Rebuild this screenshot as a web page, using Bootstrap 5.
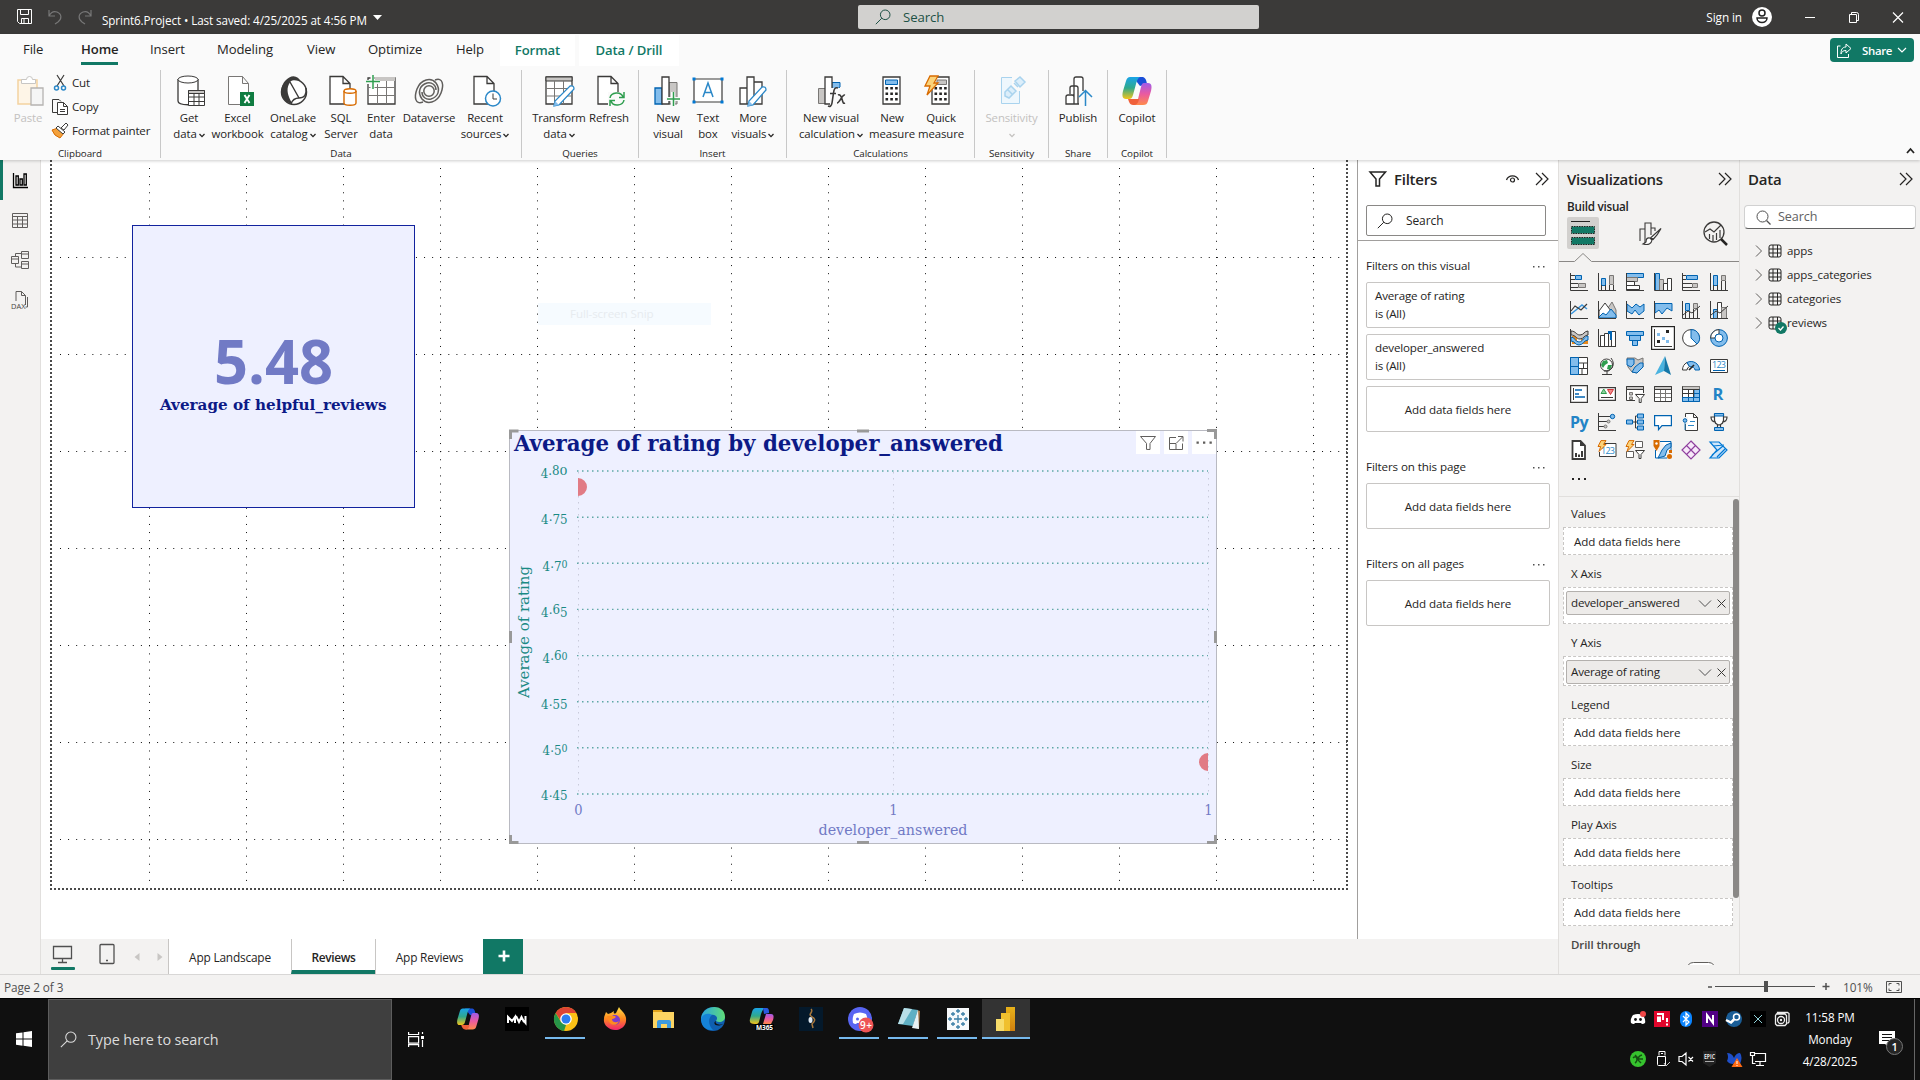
<!DOCTYPE html>
<html lang="en">
<head>
<meta charset="utf-8">
<meta name="viewport" content="width=device-width, initial-scale=1">
<title>Sprint6.Project</title>
<link href="https://cdn.jsdelivr.net/npm/bootstrap@5.3.0/dist/css/bootstrap.min.css" rel="stylesheet">
<style>
html,body{height:100%}
body{width:1920px;height:1080px;overflow:hidden;font-family:"Open Sans","Noto Sans",sans-serif;font-size:11.3px;line-height:16px;color:#252423;background:#f3f2f1;letter-spacing:-.1px}
svg{display:block;flex:none;fill:none;overflow:visible}
.nw{white-space:nowrap}
.titlebar{height:34px;background:#3b3a39;color:#fff}
.top-search{width:401px;height:24px;margin-left:476px;background:#d2d1cf;color:#1d5145;border-radius:2px;font-size:13.2px}
.ribbon{height:126px;background:#fafafa;box-shadow:0 1px 3px rgba(0,0,0,.2);position:relative;z-index:3}
.tabrow{height:34px;font-size:13.1px;padding-left:23px}
.tabrow .rt{position:relative;line-height:31px}
.tabrow .on{font-weight:600}
.tabrow .on::after{content:"";display:block;height:3px;background:#117865;margin-top:-3px}
.tabrow .ctx{background:#fff;color:#117865;font-weight:600;height:31px;margin-top:1px;line-height:30px;text-align:center}
.share{width:84px;height:24px;background:#117865;color:#fff;border-radius:4px;margin-right:6px;font-size:11.4px;font-weight:600;letter-spacing:-.3px}
.rg{height:88px;border-right:1px solid #c8c8c8;display:flex;flex-direction:column;justify-content:space-between}
.rg .gl{font-size:9.8px;line-height:12px;text-align:center;position:relative;margin-bottom:-2px;letter-spacing:-.05px}
.rb{display:flex;flex-direction:column;align-items:center;white-space:nowrap;text-align:center;line-height:16px;font-size:11.4px;padding-top:5px}
.rb>svg:first-child{margin-bottom:3px}
.rb .ln{display:flex;align-items:center;gap:2px}
.rb .ln svg{margin-top:3px}
.k{stroke:#3b3a39}.w{fill:#fff;stroke:#3b3a39}.b{fill:#83bdec;stroke:#0063b1}.bl{stroke:#0063b1}.g{fill:#c8c6c4;stroke:#797775}
.side{width:41px;background:#f3f2f1;border-right:1px solid #e1dfdd}
.side .si{height:40px;display:flex;align-items:center;justify-content:center}
.side .act{border-left:3px solid #117865;padding-right:3px}
.canvas{height:779px;background:#fff;position:relative;overflow:hidden}
.canvas>*{position:absolute}
.kpi{left:91px;top:65px;width:283px;height:283px;background:#eef0ff;border:1px solid #12239e}
.visual{left:468px;top:270px;width:708px;height:414px;background:#eef0ff;border:1px solid #b9bac2}
.toast-ghost{left:497px;top:143px;width:173px;height:22px;background:#f6fbff;color:#e7ebef;padding:3px 0 0 32px;font-size:11.600px}
.ptabs{height:35px;background:#f3f2f1}
.pt{height:35px;background:#fff;border-left:1px solid #c8c6c4;text-align:center;line-height:37px;font-size:11.9px;letter-spacing:-.2px}
.pt.on{font-weight:600;border-bottom:4px solid #117865;letter-spacing:-.35px}
.pt.add{background:#117865;width:40px;border-color:#117865}
.filters{width:201px;height:779px;background:#fff;border-left:1px solid #a19f9d;position:relative}
.ph{font-size:15px;font-weight:600;letter-spacing:-.25px;line-height:20px}
.fc{width:184px;height:46px;border:1px solid #c8c6c4;border-radius:2px;margin:0 0 6px 8px;background:#fff;padding-left:8px;font-size:11.6px;letter-spacing:-.17px;line-height:18px;display:flex;flex-direction:column;justify-content:center}
.fc.mid{align-items:center;padding:1px 0 0;letter-spacing:-.1px}
.fl{height:16px;padding:1px 13px 0 8px;font-size:11.6px}
.fl svg{margin-top:8px}
.viz{width:182px;background:#f3f2f1;border-left:1px solid #e1dfdd;border-right:1px solid #e1dfdd;position:relative}
.vgrid{display:grid;grid-template-columns:repeat(6,28px);grid-auto-rows:28px;padding-left:6px}
.vgrid>div{display:flex;align-items:center;justify-content:center}
.wl{height:32px;padding:11px 0 0 12px;font-size:11.5px}
.well{margin-left:4px;width:170px;border:1px dashed #c8c6c4;background:#fff;font-size:11.6px}
.well.e{height:28px;line-height:27px;padding-left:10px}
.pill{margin:3px 2px 0;height:24px;border:1px solid #b3b0ad;border-radius:2px;background:#edebe9;display:flex;align-items:center;padding:0 3px 0 4px;letter-spacing:-.2px}
.scr{position:absolute;right:0;top:339px;width:6px;height:399px;background:#8a8886;border-radius:3px}
.status{height:24px;border-top:1px solid #d8d7d6;background:#f3f2f1;color:#505050;font-size:11.8px}
.taskbar{height:82px;background:#101010;border-top:1px solid #000;color:#fff}
.tsearch{width:344px;height:81px;background:#3f3f3f;border:1px solid #5d5d5d;color:#dcdcdc;font-size:14.4px;letter-spacing:-.1px}
.ti{width:49px;height:39px;display:flex;align-items:center;justify-content:center;position:relative}
.ti.run::after{content:"";position:absolute;bottom:-1px;left:4px;right:5px;height:2px;background:#76b9ed}
.ti.cur{background:#333;width:48px}.ti.cur::after{left:0;right:0}
.tray{display:grid;grid-template-columns:repeat(7,24px);grid-template-rows:40px 40px}
.tray>div{display:flex;align-items:center;justify-content:center}
.clock{width:80px;font-size:11.7px;line-height:22px;text-align:center}
.geo{font-family:"DejaVu Serif Condensed","DejaVu Serif",serif;letter-spacing:0}
.sans{font-family:"Open Sans",sans-serif;letter-spacing:0}
.tree{height:24px;font-size:11.5px}
</style>
</head>
<body class="d-flex flex-column">
<svg width="0" height="0" class="position-absolute"><defs>
<linearGradient id="c1" x1="0" y1="0" x2="0" y2="1"><stop offset="0" stop-color="#1aa4e8"/><stop offset=".5" stop-color="#2fa98c"/><stop offset="1" stop-color="#f5c518"/></linearGradient>
<linearGradient id="c2" x1="0" y1="0" x2="0" y2="1"><stop offset="0" stop-color="#a05be8"/><stop offset=".5" stop-color="#ea5aa0"/><stop offset="1" stop-color="#ff8a4a"/></linearGradient>
<linearGradient id="ff" x1="0" y1="0" x2="0" y2="1"><stop offset="0" stop-color="#ffe14a"/><stop offset=".5" stop-color="#ff8a1f"/><stop offset="1" stop-color="#f0246e"/></linearGradient>
<linearGradient id="ed" x1="0" y1="0" x2="1" y2="0"><stop offset="0" stop-color="#2aa5e0"/><stop offset="1" stop-color="#5fdc78"/></linearGradient>
<linearGradient id="pb" x1="0" y1="0" x2="0" y2="1"><stop offset="0" stop-color="#e8b21a"/><stop offset="1" stop-color="#d0800f"/></linearGradient>
<symbol id="copilot" viewBox="0 0 32 32"><path fill="#1a4fd8" d="M12 2h9c3 0 4 2 5 7l-7 2z"/><path fill="url(#c1)" d="M9 2h10c-2 1-3 3-4 7l-3 11c-1 3-2 4-4 4H5c-4 0-4-4-3-8l3-10c1-3 2-4 4-4z"/><path fill="url(#c2)" d="M23 8h4c4 0 4 4 3 8l-3 10c-1 3-2 4-5 4H12c3-1 4-3 5-6l3-12c1-3 1-4 3-4z"/><path fill="#f0603a" d="M10 24h8c-1 4-2 6-6 6-3 0-4-3-5-6z"/></symbol>
<symbol id="mag" viewBox="0 0 16 16"><circle cx="10.2" cy="5.8" r="4.8" stroke="currentColor"/><path stroke="currentColor" d="M6.8 9.2L.8 15.2"/></symbol>
<symbol id="chev2" viewBox="0 0 14 14"><path stroke="#252423" stroke-width="1.2" d="M1 1l6 6-6 6M7 1l6 6-6 6"/></symbol>
<symbol id="cd" viewBox="0 0 6 5"><path stroke="currentColor" stroke-width="1.3" d="M.5 1L3 3.6 5.500 1"/></symbol>
<symbol id="dots" viewBox="0 0 12 2"><path fill="#505050" d="M0 0h1.500v1.500H0zM5 0h1.500v1.500H5zM10 0h1.500v1.500H10z"/></symbol>
<symbol id="tbl" viewBox="0 0 14 14"><rect x="1" y="1" width="12" height="12" rx="2" stroke="#252423"/><path stroke="#252423" d="M1 5h12M1 9h12M5 1v12M9.500 1v12"/></symbol>
<symbol id="bolt" viewBox="0 0 10 12"><path fill="#fbd37a" stroke="#d86b00" d="M4 .6h5L6.500 4.500H9L2 11.500 3.700 6.500H1z"/></symbol>
</defs></svg>

<!-- window title bar -->
<header class="titlebar d-flex align-items-center">
 <svg width="84" height="16" style="margin-left:17px"><path stroke="#fff" d="M.5.500h14v14h-12l-2-2zM3.500.500v5h8v-5M4.500 14.500v-5h7v5M7 10v4"/><path stroke="#777" stroke-width="1.200" d="M32 1v6h6M32 7c2-4 5-5 8-4 5 2 5 7 1 10l-3 2M74 1v6h-6M74 7c-2-4-5-5-8-4-5 2-5 7-1 10l3 2"/></svg>
 <span class="nw" id="ttl" style="width:266px;padding-left:1px;padding-top:6px;font-size:11.7px">Sprint6.Project • Last saved: 4/25/2025 at 4:56 PM</span>
 <svg width="9" height="5" style="margin-left:6px"><path fill="#fff" d="M0 0h9L4.500 5z"/></svg>
 <div class="top-search d-flex align-items-center" style="padding-left:17px"><svg width="16" height="16"><use href="#mag"/></svg><span class="ms-2 ps-1">Search</span></div>
 <div class="ms-auto d-flex align-items-center nw" style="font-size:11.800px;padding-right:16px"><span>Sign in</span>
 <svg width="20" height="20" style="margin-left:9px"><circle cx="11" cy="10" r="10" fill="#fff"/><circle cx="11" cy="6" r="3" stroke="#222" stroke-width="1.500"/><path stroke="#222" stroke-width="1.500" d="M6 11h10c0 6-10 6-10 0z"/></svg>
 <svg width="12" height="12" style="margin-left:33px"><path stroke="#fff" d="M1 6.500h10"/></svg>
 <svg width="12" height="12" style="margin-left:32px"><path stroke="#fff" d="M1.500 3.500h7v8h-7zM3.500 3V1.500h5q2 0 2 2V9.500H9"/></svg>
 <svg width="12" height="12" style="margin-left:32px"><path stroke="#fff" stroke-width="1.200" d="M1 1.500l10 10M11 1.500l-10 10"/></svg></div>
</header>

<!-- ribbon -->
<section class="ribbon">
 <nav class="tabrow d-flex nw">
  <div class="rt" style="width:58px">File</div><div style="width:69px"><span class="rt on d-inline-block">Home</span></div><div class="rt" style="width:67px">Insert</div><div class="rt" style="width:90px">Modeling</div><div class="rt" style="width:61px">View</div><div class="rt" style="width:88px">Optimize</div><div class="rt" style="width:44px">Help</div>
  <div class="rt ctx" style="width:75px">Format</div><div class="rt ctx ms-1" style="width:100px">Data / Drill</div>
  <div class="share ms-auto d-flex align-items-center" style="margin-top:4px"><svg width="15" height="15" style="margin-left:7px"><path stroke="#fff" d="M3.500 3H.5v11.500h11V11M9 1l5 4.500L9 10V7.500C6 7.500 5 8.500 4 11c0-4 1-7 5-7z"/></svg><span style="margin:1px 5px 0 10px">Share</span><svg width="10" height="7"><path stroke="#fff" stroke-width="1.200" d="M1 1l4 4 4-4"/></svg></div>
 </nav>
 <div class="d-flex" style="padding-top:2px">
  <div class="rg" style="width:161px"><div class="d-flex">
   <div class="rb" style="width:46px;margin-left:5px;color:#c3c1bf"><svg width="32" height="32"><path fill="#fef5e7" stroke="#f4d2a0" stroke-width="1.500" d="M6 5h19v24H6z"/><path fill="#fff" stroke="#c8c6c4" d="M9.500 8.500v-4h5q0-3 3-3t3 3h3v4z"/><path fill="#f5f5f5" stroke="#b5b3b1" stroke-width="1.300" d="M19 13h12v17H19z"/></svg><span>Paste</span></div>
   <div class="d-flex flex-column nw" style="padding:1px 0 0 1px;font-size:11.600px;letter-spacing:-.2px">
    <div class="d-flex align-items-center" style="height:24px"><svg width="18" height="18"><path stroke="#3b3a39" stroke-width="1.200" d="M5 1l7 11M12 1L5 12"/><circle cx="4.500" cy="14" r="2" stroke="#2b88c8" stroke-width="1.500"/><circle cx="11.500" cy="14" r="2" stroke="#2b88c8" stroke-width="1.500"/></svg><span style="margin-left:2px">Cut</span></div>
    <div class="d-flex align-items-center" style="height:24px"><svg width="18" height="18"><path class="k" d="M6 14.500H.5V1.500H7l2 2"/><path class="w" d="M5.500 4.500h6l4 4v8h-10zM11.500 4.500v4h4M8 11.500h5M8 13.500h5"/></svg><span style="margin-left:2px">Copy</span></div>
    <div class="d-flex align-items-center" style="height:24px"><svg width="18" height="18"><path class="w" d="M9 6l5-5 2 2-4 5z"/><path fill="#f3a13c" stroke="#d86b00" d="M0 8l6-2 6 5-4 5q-6-2-8-8z"/><path class="w" d="M6 4l7 6-2 2-7-6z"/></svg><span style="margin-left:2px">Format painter</span></div>
   </div></div><div class="gl">Clipboard</div></div>

  <div class="rg" style="width:361px"><div class="d-flex" style="padding-left:5px">
   <div class="rb" style="width:46px"><svg width="32" height="32"><path class="w" stroke-width="1.300" d="M5 4v22c0 5 20 5 20 0V4"/><ellipse class="w" cx="15" cy="4.500" rx="10" ry="3.500"/><path fill="#fff" stroke="#3b3a39" d="M15.500 15.500h16v15h-16zM15.500 22h16M15.500 26.500h16M21 19v11M26 19v11"/><path fill="#c8c6c4" stroke="#3b3a39" d="M15.500 15.500h16v3h-16z"/></svg><span>Get</span><span class="ln">data<svg width="6" height="5"><use href="#cd"/></svg></span></div>
   <div class="rb" style="width:51px"><svg width="32" height="32"><path fill="#fff" stroke="#797775" d="M6.500 1.500h14l6 7v21h-20zM20.500 1.500v7h6"/><path fill="#107c41" d="M18 17h14v14H18z"/><path stroke="#fff" stroke-width="1.900" d="M22.500 20l5 8M27.500 20l-5 8"/></svg><span>Excel</span><span>workbook</span></div>
   <div class="rb" style="width:60px"><svg width="32" height="32"><circle cx="17" cy="17" r="12.500" fill="#fff" stroke="#3b3a39" stroke-width="1.500"/><path fill="#3b3a39" d="M8 6C14-1 21 0 24 7 20 4 17 4 14 6l-2 3c-3 6-1 12 3 19C5 29 1 14 8 6z"/><path class="k" stroke-width="1.400" d="M13 7l9 16c-4 0-7 3-8 6M22 23c5 0 8-3 7-10"/></svg><span>OneLake</span><span class="ln">catalog<svg width="6" height="5"><use href="#cd"/></svg></span></div>
   <div class="rb" style="width:36px"><svg width="32" height="32"><path class="w" stroke-width="1.300" d="M5 1.500h13l7 7V29H5zM18 1.500v7h7"/><path fill="#fff" stroke="#d86b00" stroke-width="1.400" d="M19 16v12c0 3 12 3 12 0V16"/><ellipse cx="25" cy="16" rx="6" ry="2.200" fill="#fff" stroke="#d86b00" stroke-width="1.400"/></svg><span>SQL</span><span>Server</span></div>
   <div class="rb" style="width:44px"><svg width="32" height="32"><path class="w" stroke-width="1.300" d="M3 3h27v26H3z"/><path fill="#c8c6c4" d="M10 2h20v4H10z"/><path stroke="#797775" d="M3 12.500h27M3 20.500h27M12.500 6v23M21.500 6v23"/><path stroke="#fafafa" stroke-width="4" d="M0 7h15M7.500 0v14"/><path stroke="#2f9e4f" stroke-width="1.500" d="M1 6.500h14M8 0v14"/></svg><span>Enter</span><span>data</span></div>
   <div class="rb" style="width:52px"><svg width="32" height="32"><g stroke="#605e5c" stroke-width="1.500"><circle cx="16" cy="16" r="5.200"/><path d="M10 27C2 30 1 22 4 14 8 4 18 2 23 8c5 7 2 14-5 16-5 1-9-2-9-7M22 5c8-3 9 5 6 13-4 10-14 12-19 6-5-7-2-14 5-16 5-1 9 2 9 7"/></g></svg><span>Dataverse</span></div>
   <div class="rb" style="width:60px"><svg width="32" height="32"><path class="w" stroke-width="1.300" d="M5 1.500h13l7 7V29H5zM18 1.500v7h7"/><circle cx="24" cy="23.500" r="7.500" fill="#fff" stroke="#2b88c8" stroke-width="1.500"/><path class="k" d="M24 18.500v5.500h4"/></svg><span>Recent</span><span class="ln">sources<svg width="6" height="5"><use href="#cd"/></svg></span></div>
  </div><div class="gl">Data</div></div>

  <div class="rg" style="width:117px"><div class="d-flex" style="padding-left:8px">
   <div class="rb" style="width:58px"><svg width="32" height="32"><path class="w" stroke-width="1.300" d="M3 2h26v27H3z"/><path fill="#c8c6c4" stroke="#3b3a39" d="M3 2h26v4H3z"/><path stroke="#797775" d="M3 13.500h26M3 21h26M11.500 6v23M20.500 6v23"/><path fill="#fff" stroke="#2b88c8" stroke-width="1.300" d="M27 11q4-1 4 3L16 30l-5 1 1-5z"/><path fill="#83bdec" d="M12 26l4 4-5 1z"/></svg><span style="letter-spacing:-.25px">Transform</span><span class="ln">data<svg width="6" height="5"><use href="#cd"/></svg></span></div>
   <div class="rb" style="width:42px"><svg width="32" height="32"><path class="w" stroke-width="1.300" d="M5 1.500h13l7 7V29H5zM18 1.500v7h7"/><path fill="#fafafa" d="M15 17h17v15H15z"/><path stroke="#2f9e4f" stroke-width="1.500" d="M17 23c1-6 11-7 13-1M31 17v5.500h-5M31 25c-1 6-11 7-13 1M17 31v-5.500h5"/></svg><span>Refresh</span></div>
  </div><div class="gl">Queries</div></div>

  <div class="rg" style="width:148px"><div class="d-flex" style="padding-left:8px">
   <div class="rb" style="width:42px"><svg width="32" height="32"><path class="b" stroke-width="1.300" d="M3 13h7v16H3z"/><path fill="#c8c6c4" stroke="#797775" d="M17 7.500h8V29h-8z"/><path class="w" stroke-width="1.300" d="M10 2h7v27h-7z"/><path stroke="#fafafa" stroke-width="4" d="M14 24h14M21 17v15"/><path stroke="#2f9e4f" stroke-width="1.500" d="M15 24h13M21.500 17v14"/></svg><span>New</span><span>visual</span></div>
   <div class="rb" style="width:38px"><svg width="32" height="32"><path class="w" stroke-width="1.200" d="M2 4h28v23H2z"/><path fill="#0078d4" d="M.5 2.500h3v3h-3zM28.500 2.500h3v3h-3zM.5 25.500h3v3h-3zM28.500 25.500h3v3h-3z"/><path stroke="#2b88c8" stroke-width="1.500" d="M11 22L16 8l5 14M12.500 17.500h7"/></svg><span>Text</span><span>box</span></div>
   <div class="rb" style="width:52px"><svg width="32" height="32"><path class="w" stroke-width="1.300" d="M3 13h7v16H3zM10 2h7v27h-7zM17 7h8v22h-8z"/><path fill="#fff" stroke="#2b88c8" stroke-width="1.300" d="M25 12q4-1 4 3L16 30l-5 1 1-5z"/><path fill="#83bdec" d="M12 26l4 4-5 1z"/></svg><span>More</span><span class="ln">visuals<svg width="6" height="5"><use href="#cd"/></svg></span></div>
  </div><div class="gl">Insert</div></div>

  <div class="rg" style="width:188px"><div class="d-flex" style="padding-left:7px">
   <div class="rb" style="width:74px"><svg width="32" height="32"><path fill="#c8c6c4" stroke="#797775" d="M3.500 13.500h7v15h-7z"/><path class="b" d="M17 7.500h8V12l-8 6z"/><path class="w" stroke-width="1.300" d="M10 2h7v27h-7z"/><path fill="#fafafa" d="M15 13h17v19H15z"/><path class="k" stroke-width="1.600" d="M23 13c-3-1-4 1-4.500 5L17 28c-.5 3-2 4-4 3M15 18.500h6M23 20c2-1 3 1 4 4s1 5 3 4M30 20c-3-1-5 8-8 8"/></svg><span>New visual</span><span class="ln">calculation<svg width="6" height="5"><use href="#cd"/></svg></span></div>
   <div class="rb" style="width:48px"><svg width="32" height="32"><path class="w" stroke-width="1.300" d="M7 2h17v27H7z"/><path class="b" d="M9.500 5h12v4.500h-12z"/><path stroke="#252423" stroke-width="2.600" stroke-dasharray="2.600 2.200" d="M9.500 13.300h12.200M9.500 18.800h12.200M9.500 24.300h12.200"/></svg><span>New</span><span>measure</span></div>
   <div class="rb" style="width:50px"><svg width="32" height="32"><path class="w" stroke-width="1.300" d="M7 2h17v27H7z"/><path fill="#c8c6c4" stroke="#797775" d="M12 5h9.500v4.500H12z"/><path stroke="#252423" stroke-width="2.600" stroke-dasharray="2.600 2.200" d="M9.500 13.300h12.200M9.500 18.800h12.200M9.500 24.300h12.200"/><path fill="#fbd37a" stroke="#d86b00" stroke-width="1.300" d="M5 1h8l-4 7h4L2 20l3-9H0z"/></svg><span>Quick</span><span>measure</span></div>
  </div><div class="gl">Calculations</div></div>

  <div class="rg" style="width:74px"><div class="rb" style="color:#c3c1bf"><svg width="32" height="32"><path fill="#eef7fd" stroke="#a9d3ee" d="M5.500 2.500h18v26h-18z"/><path fill="#fafafa" d="M16 0h14v16H16z"/><path fill="#dceefa" stroke="#a9d3ee" stroke-width="1.500" d="M9 17l6-6 5 5-7 7-4-2zM12 15l4 4M19 6l5-4 5 5-5 5zM24 2l4 4M22 12l-4-4"/></svg><span>Sensitivity</span><svg width="6" height="5" style="margin-top:7px"><use href="#cd"/></svg></div><div class="gl">Sensitivity</div></div>
  <div class="rg" style="width:59px"><div class="rb"><svg width="32" height="32"><path class="w" stroke-width="1.300" d="M12 12V4q0-2 2-2h5q2 0 2 2v25H12zM8 19v-6q0-2 2-2h4q2 0 2 2v16M4 29v-7q0-2 2-2h4q2 0 2 2v7z"/><path fill="#fafafa" d="M17 16h12v15H17z"/><path stroke="#2b88c8" stroke-width="1.500" d="M23.500 31V16.500M17 22l6.500-6.500L30 22"/></svg><span>Publish</span></div><div class="gl">Share</div></div>
  <div class="rg" style="width:59px"><div class="rb"><svg width="32" height="32"><use href="#copilot" x="0" y="0" width="32" height="32"/></svg><span>Copilot</span></div><div class="gl">Copilot</div></div>
  <svg width="9" height="6" class="ms-auto align-self-end" style="margin:0 5px 4px 0"><path stroke="#252423" stroke-width="1.800" d="M1 5l3.500-4L8 5"/></svg>
 </div>
</section>

<!-- workspace -->
<main class="d-flex" style="height:814px">
 <aside class="side">
  <div class="si act"><svg width="16" height="18"><path stroke="#000" stroke-width="1.300" d="M1.500 2v14.500H16M4 5h2.300v9H4zM8 8h2.300v6H8zM12 3h2.300v11H12z"/></svg></div>
  <div class="si"><svg width="17" height="17"><path stroke="#605e5c" d="M.5 1.500h15v14H.5zM.5 4.500h15M.5 8h15M.5 12h15M5.500 4v11M10.500 4v11"/></svg></div>
  <div class="si"><svg width="18" height="18"><path stroke="#605e5c" d="M10.500.500h7v7h-7zM10.500 3h7M.5 5.500h7v7h-7zM.5 8h7M10.500 10.500h7v7h-7zM10.500 13h7M10 2.500H4.500V5M4.500 13v3H10"/></svg></div>
  <div class="si"><svg width="19" height="18"><path stroke="#605e5c" d="M5 10V.500h5.500l4 4V14M10.500.500v4h4M16.500 6v10h-2"/><path fill="#f3f2f1" d="M0 11h14v7H0z"/><text class="sans" x="0" y="17.500" fill="#484644" font-size="7.500" textLength="14.500" lengthAdjust="spacingAndGlyphs">DAX</text></svg></div>
 </aside>

 <div class="d-flex flex-column" style="width:1517px">
 <div class="d-flex">
  <section class="canvas" style="width:1316px">
   <svg width="1316" height="779" viewBox="41 160 1316 779">
    <path stroke="#111" stroke-dasharray="1 7.090" d="M149.500 168V888M246.500 168V888M343.500 168V888M440.500 168V888M537.500 168V888M634.500 168V888M731.500 168V888M828.500 168V888M925.500 168V888M1022.500 168V888M1119.500 168V888M1216.500 168V888M1313.500 168V888M60 257.500H1347M60 354.500H1347M60 451.500H1347M60 548.500H1347M60 645.500H1347M60 742.500H1347M60 839.500H1347"/>
    <path stroke="#4a4a4a" stroke-width="2" stroke-dasharray="2 2" d="M51 160V890M50 889H1348M1347 160V890"/>
   </svg>
   <div class="toast-ghost nw">Full-screen Snip</div>
   <div class="kpi"><svg width="281" height="281" viewBox="133 226 281 281"><text class="sans" x="214" y="384" font-size="61" font-weight="700" fill="#717ac5" textLength="119" lengthAdjust="spacingAndGlyphs">5.48</text><text class="geo" x="160" y="410" font-size="15.500" font-weight="700" fill="#0c1a86" textLength="226.500" lengthAdjust="spacingAndGlyphs">Average of helpful_reviews</text></svg></div>
   <div class="visual"><svg width="706" height="412" viewBox="510 431 706 412">
    <text class="geo" x="514" y="451" font-size="21.500" font-weight="700" fill="#0c1a86" textLength="489" lengthAdjust="spacingAndGlyphs">Average of rating by developer_answered</text>
    <path fill="#fff" d="M1136 431h24v23h-24zM1164 431h24v23h-24zM1192 431h24v23h-24z"/>
    <path stroke="#605e5c" d="M1140.500 436.500h15l-5.500 7v6l-3.500-.1v-6zM1176 437.500h-6.500v12h13v-6M1170 443.500h6v6M1176.500 443l6-6M1178 436.500h5v5"/>
    <path fill="#605e5c" d="M1196.500 441.500h2.300v2.300h-2.300zM1203 441.500h2.300v2.300h-2.300zM1209.500 441.500h2.300v2.300h-2.300z"/>
    <path stroke="#c9cbdb" stroke-dasharray="1.500 4.500" d="M578.500 472V794M893.500 472V794M1208.500 472V794"/>
    <path stroke="#5fa8a6" stroke-dasharray="1.500 3.500" stroke-width="1.400" d="M577 471H1208M577 517.200H1208M577 563.300H1208M577 609.400H1208M577 655.600H1208M577 701.700H1208M577 747.800H1208M577 794H1208"/>
    <path fill="#e17b85" d="M578 478a9 9 0 0 1 0 18zM1208 753a9 9 0 0 0 0 18z"/>
    <g class="geo" font-size="13.200" fill="#1a8a84" text-anchor="end">
     <text x="567.500" y="475" dy="3 -3 0 0">4.8<tspan font-size="10.500" textLength="8" lengthAdjust="spacingAndGlyphs">0</tspan></text><text x="567.500" y="521" dy="3 -3 3 0">4.75</text><text x="567.500" y="568" dy="3 -3 3 -3">4.7<tspan font-size="10.500">0</tspan></text><text x="567.500" y="614" dy="3 -3 0 3">4.65</text><text x="567.500" y="660" dy="3 -3 0 0">4.6<tspan font-size="10.500">0</tspan></text><text x="567.500" y="706" dy="3 -3 3 0">4.55</text><text x="567.500" y="752" dy="3 -3 3 -3">4.5<tspan font-size="10.500">0</tspan></text><text x="567.500" y="797" dy="3 -3 3 0">4.45</text></g>
    <text class="geo" transform="translate(529 698) rotate(-90)" font-size="15.500" fill="#1a8a84" textLength="132" lengthAdjust="spacingAndGlyphs">Average of rating</text>
    <g class="geo" font-size="14.500" fill="#717ac5" text-anchor="middle"><text x="578.500" y="815">0</text><text x="893.500" y="815">1</text><text x="1208.500" y="815">1</text><text x="893" y="834.500" font-size="15" textLength="149" lengthAdjust="spacingAndGlyphs">developer_answered</text></g>
    <path stroke="#999" stroke-width="3" d="M510.500 439v-8h8M1207 430.500h8.500V439M510.500 835v7.500h8M1207 842.500h8.500V835M857 431h12M857 842.500h12M510.500 631v12M1215.500 631v12"/>
   </svg></div>
  </section>

  <section class="filters nw">
   <div class="d-flex align-items-center" style="padding:9px 9px 0 11px"><svg width="18" height="18"><path stroke="#252423" stroke-width="1.500" d="M1 2h15.500L10.500 9v7h-3.500V9z"/></svg><span class="ph" style="margin-left:7px">Filters</span>
    <svg width="15" height="10" class="ms-auto"><path stroke="#252423" stroke-width="1.300" d="M1.500 6C3.500.500 11.500.500 13.500 6"/><circle cx="7.500" cy="6" r="2" stroke="#252423" stroke-width="1.200"/></svg>
    <svg width="14" height="14" style="margin-left:15px"><use href="#chev2"/></svg></div>
   <div class="d-flex align-items-center" style="margin:16px 0 0 8px;width:180px;height:31px;border:1px solid #8a8886;border-radius:2px;font-size:12px;padding-left:10px"><svg width="16" height="16"><use href="#mag"/></svg><span style="margin-left:13px">Search</span></div>
   <div style="border-top:1px solid #a19f9d;margin-top:4px;height:17px"></div>
   <div class="fl d-flex justify-content-between"><span>Filters on this visual</span><svg width="12" height="2"><use href="#dots"/></svg></div>
   <div style="height:9px"></div>
   <div class="fc"><div>Average of rating</div><div>is (All)</div></div>
   <div class="fc"><div>developer_answered</div><div>is (All)</div></div>
   <div class="fc mid">Add data fields here</div>
   <div style="height:20px"></div>
   <div class="fl d-flex justify-content-between"><span>Filters on this page</span><svg width="12" height="2"><use href="#dots"/></svg></div>
   <div style="height:9px"></div>
   <div class="fc mid">Add data fields here</div>
   <div style="height:20px"></div>
   <div class="fl d-flex justify-content-between"><span>Filters on all pages</span><svg width="12" height="2"><use href="#dots"/></svg></div>
   <div style="height:9px"></div>
   <div class="fc mid">Add data fields here</div>
  </section>
 </div>
 <nav class="ptabs d-flex nw">
  <svg width="127" height="35"><path stroke="#505050" stroke-width="1.300" d="M12.500 7.500h18v12h-18zM21.500 20v3M17 23.500h9M60 5.500h12q1 0 1 1v17q0 1-1 1H60q-1 0-1-1v-17q0-1 1-1zM65 21.500h2"/><rect x="10" y="28" width="24" height="3" rx="1" fill="#117865"/><path fill="#c8c6c4" d="M98.500 14v8l-5-4zM116.500 14v8l5-4z"/></svg>
  <div class="pt" style="width:123px">App Landscape</div><div class="pt on" style="width:84px">Reviews</div><div class="pt" style="width:108px">App Reviews</div><div class="pt add d-flex align-items-center justify-content-center"><svg width="12" height="12" style="margin-top:-2px"><path stroke="#fff" stroke-width="2.600" d="M6 .500v11M.5 6h11"/></svg></div>
 </nav>
 </div>

 <section class="viz nw">
  <div class="d-flex align-items-center ph" style="padding:9px 7px 0 8px">Visualizations<svg width="14" height="14" class="ms-auto"><use href="#chev2"/></svg></div>
  <div style="padding:9px 0 0 8px;font-size:11.700px;font-weight:600;letter-spacing:-.25px">Build visual</div>
  <svg width="180" height="52" viewBox="1559 214 180 52"><rect x="1567" y="217" width="32" height="32" rx="2" fill="#d2d0ce"/><path stroke="#252423" d="M1571 221.500h19"/><path fill="#117865" stroke="#252423" stroke-dasharray="1.500 1" d="M1571.500 226.500h23v7h-23zM1571.500 237.500h23v7h-23z"/>
   <path stroke="#3b3a39" stroke-width="1.100" d="M1640 241v-12h5v14M1645 229v-6h6v12M1651 228h4v3"/><path fill="#fff" stroke="#3b3a39" stroke-width="1.200" d="M1661 228.500l-10 9 2 2q5-5 8-11zM1650 238q-4-1-4 4l-3 2q8 2 9-4z"/>
   <circle cx="1714" cy="232" r="10" stroke="#3b3a39" stroke-width="1.300"/><path stroke="#3b3a39" stroke-width="1.200" d="M1705 232l5-3 4 3 7-7M1709.500 234v5M1713 235v6M1716.500 233v7M1720 230v8"/><path stroke="#252423" stroke-width="2.500" d="M1721 239l6 6"/>
   <path stroke="#8a8886" fill="none" d="M1559 261.500h15.500l8.500-8 8.500 8H1739"/></svg>
  <div class="vgrid" style="padding-top:2px">
   <div><svg width="18" height="18"><path class="b" d="M5.500 2.500h6v4h-6z"/><path class="g" d="M8.500 10.500h7v4h-7z"/><path class="k" d="M.5 0v17.500H18M1 2.500h4M1 6.500h4M1 10.500h7M1 14.500h7"/></svg></div>
   <div><svg width="18" height="18"><path class="b" d="M3.500 5.500h4v7h-4z"/><path class="g" d="M11.500 2.500h4v9h-4z"/><path class="k" d="M.5 0v17.500H18M3.500 12v5M7.500 12v5M11.500 12v5M15.500 12v5"/></svg></div>
   <div><svg width="18" height="18"><path class="b" d="M.5.500h17v4H.5z"/><path class="g" d="M.5 4.500h11v4H.5z"/><path class="w" d="M.5 8.500h8v4h-8zM.5 12.500h13v4H.5z"/><path class="k" d="M.5 0v17.500H18"/></svg></div>
   <div><svg width="18" height="18"><path class="b" d="M1.500.500h4v17h-4z"/><path class="g" d="M5.500 6.500h4v11h-4z"/><path class="w" d="M9.500 10.500h4v7h-4zM13.500 5.500h4v12h-4z"/><path class="k" d="M.5 0v17.500H18"/></svg></div>
   <div><svg width="18" height="18"><path class="b" d="M4.500 2.500h11v4h-11z"/><path class="g" d="M10.500 10.500h5v4h-5z"/><path class="k" d="M.5 0v17.500H18M1 2.500h3M1 6.500h3M1 10.500h9M1 14.500h9"/></svg></div>
   <div><svg width="18" height="18"><path class="b" d="M3.500 2.500h4v10h-4z"/><path class="g" d="M11.500 2.500h4v5h-4z"/><path class="k" d="M.5 0v17.500H18M3.500 12v5M7.500 12v5M11.500 8v9M15.500 8v9"/></svg></div>

   <div><svg width="18" height="18"><path stroke="#3a96dd" stroke-width="1.600" d="M1 13l5-4 6-5 5 4"/><path class="k" stroke-width="1.200" d="M1 10l4-5 6 4 6-6"/><path class="k" d="M.5 0v17.500H18"/></svg></div>
   <div><svg width="18" height="18"><path fill="#c8c6c4" stroke="#797775" d="M8 10l6-9 4 8v8z"/><path class="w" d="M1 10l6-8 6 8-5 6H1z"/><path class="b" d="M1 16l4-4 3 2 5-6 5 6v3H1z"/><path class="k" d="M.5 0v17.500H18"/></svg></div>
   <div><svg width="18" height="18"><path class="b" d="M1 3l5 4 4-4 4 3 4-3v7l-5 4-4-5-3 4-5-3z"/><path class="k" d="M.5 0v17.500H18"/></svg></div>
   <div><svg width="18" height="18"><path class="b" d="M1 2.500h17V10l-5-3-5 6-3-4-4 3z"/><path class="k" d="M.5 0v17.500H18"/></svg></div>
   <div><svg width="18" height="18"><path class="b" d="M3.500 2.500h4v7h-4z"/><path class="g" d="M11.500 2.500h4v5h-4z"/><path class="k" d="M.5 0v17.500H18M3.500 10v7M7.500 10v7M11.500 8v9M15.500 8v9M1 14l5-4 4 2 8-7"/></svg></div>
   <div><svg width="18" height="18"><path class="b" d="M3.500 8.500h4v9h-4z"/><path class="w" d="M7.500 1.500h4v16h-4z"/><path class="g" d="M11.500 6.500h5v11h-5z"/><path class="k" d="M.5 0v17.500H18M1 14l5-4 4 2 8-7"/></svg></div>

   <div><svg width="18" height="18"><path fill="#e8891c" d="M2 7h5v8H2zM11 10h7v5h-7z"/><path class="b" d="M1 8c4 0 4 5 8 5s5-6 9-6v4c-4 0-5 5-9 5s-4-4-8-4z"/><path fill="#c8c6c4" stroke="#3b3a39" d="M1 2c5 0 5 4 9 4s4-4 8-4v4c-4 0-4 4-8 4S6 6 1 6z"/><path class="k" d="M.5 0v17.500H18"/></svg></div>
   <div><svg width="18" height="18"><path class="w" d="M2.500 6.500h4v11h-4zM6.500 4.500h4v13h-4zM13.500 2.500h4v15h-4z"/><path fill="#0063b1" d="M10 2h4v9h-2V5h-2z"/><path class="k" d="M.5 0v17.500H18"/></svg></div>
   <div><svg width="18" height="18"><path class="b" d="M.5 2.500h17v4H.5zM3.500 6.500h11v5h-11zM6.500 11.500h5v5h-5z"/></svg></div>
   <div><svg width="24" height="24"><rect x=".6" y=".6" width="22.800" height="22.800" fill="#fff" stroke="#252423" stroke-width="1.200"/><path class="k" d="M3.500 3v17.500H21"/><path fill="#252423" d="M15 4h3v3h-3zM6 14h3v3H6z"/><path fill="#83bdec" d="M6 7h3v3H6zM11 11h3v3h-3zM15 14h3v3h-3z"/></svg></div>
   <div><svg width="18" height="18"><circle cx="9" cy="9" r="8.400" fill="#fff" stroke="#3b3a39"/><path class="b" d="M9 .600A8.400 8.400 0 0 1 15 15L9 9z"/></svg></div>
   <div><svg width="18" height="18"><circle cx="9" cy="9" r="8.400" fill="#83bdec" stroke="#0063b1"/><path fill="#fff" stroke="#3b3a39" d="M9 .600V5A4 4 0 0 0 5 9H.6A8.400 8.400 0 0 1 9 .600z"/><circle cx="9" cy="9" r="4" fill="#fff" stroke="#0063b1"/></svg></div>

   <div><svg width="18" height="18"><path class="w" d="M.5.500h17v17H.5zM9 6h9M13.500 6v5.500M9 11.500h9M12 11.500v6"/><path class="b" d="M.5.500h8v9h-8zM.5 9.500h8v8h-8z"/></svg></div>
   <div><svg width="18" height="18"><circle cx="8.500" cy="8" r="6" fill="#fff" stroke="#3b3a39"/><path fill="#2f9e4f" d="M5 4l4-1 1 3-3 2-2 3-2-3zM10 8l4 0-2 5-3-1z"/><path class="k" d="M13 1q4 5 1 10-3 4-8 3M9 14v3M4 17.500h10"/></svg></div>
   <div><svg width="18" height="18"><path fill="#c8c6c4" stroke="#797775" d="M1 1h8l3 2 5-2v9l-6 6-5-1-4-5z"/><path class="b" d="M1 2h7v5l-3 3-4-2zM9 10l5-4h3v4l-4 4-2 2-5-1z"/></svg></div>
   <div><svg width="18" height="20"><path fill="#4ab3e0" d="M11 0L1 19l9-4z"/><path fill="#1577a8" d="M11 0l6 19-7-4z"/></svg></div>
   <div><svg width="18" height="18"><path fill="#fff" stroke="#3b3a39" d="M.5 13A8.500 8.500 0 0 1 5 5.500l2.500 4Q5 10.500 5 13z"/><path class="b" d="M5 5.500A8.500 8.500 0 0 1 17.500 13H13q0-3-5.500-3.500z"/><path stroke="#252423" stroke-width="1.600" d="M7 13l5-5"/></svg></div>
   <div><svg width="18" height="18"><path class="w" d="M.5 2.500h17v13H.5z"/><text class="sans" x="2" y="11" font-size="9" fill="#2b88c8" textLength="14">123</text><path class="bl" d="M3 13.500h12"/></svg></div>

   <div><svg width="18" height="18"><path class="w" stroke-width="1.200" d="M.6.600h16.800v16.800H.6z"/><path class="k" d="M3.500 3v12"/><path stroke="#0063b1" stroke-width="1.700" d="M5 5h7M5 9h4M5 12h10"/></svg></div>
   <div><svg width="18" height="18"><path class="w" stroke-width="1.200" d="M.6 2.600h16.800v12.800H.6z"/><path fill="#8fd19e" stroke="#2f9e4f" d="M3 8.500h5.500L5.700 4z"/><path fill="#f28b8b" stroke="#d13438" d="M9.500 4.500h6l-3 5z"/><path class="k" d="M3 12.500h12"/></svg></div>
   <div><svg width="19" height="18"><path class="w" d="M.5 1.500h17v14H.5z"/><path fill="#c8c6c4" stroke="#3b3a39" d="M.5 1.500h17v3H.5z"/><path class="g" d="M3.500 7.500h3v2.500h-3zM3.500 12h3v2.500h-3z"/><path fill="#f3f2f1" d="M9 8h10v10H9z"/><path class="w" d="M9.500 9.500h9l-3.300 4v4h-2v-4z"/></svg></div>
   <div><svg width="18" height="18"><path class="w" d="M.5 1.500h17v15H.5z"/><path fill="#c8c6c4" stroke="#3b3a39" d="M.5 1.500h17v3H.5z"/><path stroke="#797775" d="M1 8.500h16M1 12.500h16M6.500 5v11M11.500 5v11"/></svg></div>
   <div><svg width="18" height="18"><path class="w" d="M.5 1.500h17v15H.5z"/><path class="g" d="M.5 1.500h17v3H.5z"/><path class="b" d="M12 4.500h5.500v12H.5v-4H12z"/><path stroke="#3b3a39" d="M.5 8.500h11M6.500 4v8M11.500 4v8M.5 1.500V12M.5 4.500h17"/><path class="bl" d="M12 8.500h5M12 12.500h5M6.500 13v3M11.500 13v3"/></svg></div>
   <div><span style="font-size:16.500px;font-weight:700;color:#2384c6;padding-right:2px">R</span></div>

   <div><span style="font-size:16px;font-weight:700;color:#2384c6;letter-spacing:-.6px">Py</span></div>
   <div><svg width="18" height="18"><path class="k" d="M.5 0v17.500H18M1 3.500h12M1 8.500h8M1 13.500h5"/><circle class="b" cx="14.500" cy="3.500" r="2.200"/><circle class="g" cx="10.500" cy="8.500" r="1.500"/><circle class="g" cx="7.500" cy="13.500" r="1.500"/></svg></div>
   <div><svg width="18" height="18"><path class="k" d="M7 9h5M12 3H9.500v12H12"/><path class="b" d="M.5 7h6v4h-6zM11.500 1h6v4h-6zM11.500 7h6v4h-6zM11.500 13h6v4h-6z"/></svg></div>
   <div><svg width="18" height="18"><path fill="#fff" stroke="#0063b1" stroke-width="1.200" d="M.6 2.600h16.800v10H8l-3.500 4v-4H.6z"/></svg></div>
   <div><svg width="18" height="18"><path class="w" d="M3.500.500h8l4 4v13h-12zM11.500.500v4h4"/><path fill="#f3f2f1" d="M1 4h5v7H1z"/><circle class="b" cx="3" cy="7.500" r="1.800"/><path stroke="#2b88c8" d="M8 8.500h5M6 12.500h6M3 10v7"/></svg></div>
   <div><svg width="18" height="18"><path class="w" stroke-width="1.200" d="M4.500 4H1q0 5 5 5M13.500 4H17q0 5-5 5M4.500 1h9v6q0 4-4.500 5-4.500-1-4.500-5zM7.500 12h3v3h-3z"/><path class="b" d="M4.500.500h9V3h-9zM4.500 14.500h9v3h-9z"/></svg></div>

   <div><svg width="16" height="20"><path fill="#fff" stroke="#3b3a39" stroke-width="1.800" d="M1.500 1h8l4.500 4.500V19H1.500z"/><path fill="#3b3a39" d="M9 1l5 5H9zM4 13h2v4H4zM7 14.500h2V17H7zM10 11h2v6h-2z"/></svg></div>
   <div><svg width="20" height="20"><path class="w" d="M5 3.500h14v13H2.500V12"/><text class="sans" x="4" y="13.500" font-size="9" fill="#2b88c8" textLength="14">123</text><use href="#bolt" x="0" y="0" width="10" height="12"/></svg></div>
   <div><svg width="20" height="20"><path fill="#fff" stroke="#605e5c" d="M10.500 1.500h7v6h-7zM1.500 11.500h7v6h-7z"/><use href="#bolt" x="0" y="0" width="10" height="12"/><path class="w" d="M10.500 10.500h9l-3.500 4v4h-2v-4z"/></svg></div>
   <div><svg width="20" height="20"><path fill="#fff" stroke="#0063b1" d="M7 1.500h11v9M2.500 10v8H14"/><path class="b" d="M9 10l4-5 5-2v4l-4 3-2 6-7 2z"/><path fill="#d86b00" d="M.5 0h6v6l-3 5-3-5z"/><circle cx="3.500" cy="3.500" r="1.200" fill="#fff"/><circle cx="16.500" cy="16.500" r="2.500" fill="#d86b00"/><path fill="#d86b00" d="M16 10h3v3h-3z"/></svg></div>
   <div><svg width="20" height="20"><g fill="#f7e8f9" stroke="#8f3f9e" stroke-width="1.200"><path d="M10 1l9 9-9 9-9-9z"/><path d="M5.500 5.500l9 9M14.500 5.500l-9 9"/></g></svg></div>
   <div><svg width="20" height="18"><path fill="#cfe6fa" stroke="#0078d4" stroke-width="1.200" d="M1 1h9l8 8-8 8H1l7-8zM4 5l11-1M3 14L14 5M8 16l8-8"/></svg></div>
  </div>
  <div style="height:33px;padding:14px 0 0 12px;border-bottom:1px solid #e1dfdd"><svg width="16" height="3"><path fill="#252423" d="M1 0h2v2H1zM7 0h2v2H7zM13 0h2v2h-2z"/></svg></div>
  <div style="height:468px;overflow:hidden;padding-top:1px"><div style="margin-top:-3px">
   <div class="wl">Values</div><div class="well e">Add data fields here</div>
   <div class="wl">X Axis</div><div class="well" style="height:37px"><div class="pill"><span class="flex-grow-1">developer_answered</span><svg width="12" height="7"><path stroke="#505050" d="M0 .500l6 6 6-6"/></svg><svg width="9" height="9" style="margin-left:6px"><path stroke="#3b3a39" d="M.5.500l8 8M8.500.500l-8 8"/></svg></div></div>
   <div class="wl">Y Axis</div><div class="well" style="height:30px"><div class="pill"><span class="flex-grow-1">Average of rating</span><svg width="12" height="7"><path stroke="#505050" d="M0 .500l6 6 6-6"/></svg><svg width="9" height="9" style="margin-left:6px"><path stroke="#3b3a39" d="M.5.500l8 8M8.500.500l-8 8"/></svg></div></div>
   <div class="wl">Legend</div><div class="well e">Add data fields here</div>
   <div class="wl">Size</div><div class="well e">Add data fields here</div>
   <div class="wl">Play Axis</div><div class="well e">Add data fields here</div>
   <div class="wl">Tooltips</div><div class="well e">Add data fields here</div>
   <div class="wl" style="font-weight:600;color:#484644">Drill through</div>
   <div class="d-flex justify-content-between" style="padding:4px 23px 0 12px;height:20px"><span>Cross-report</span><svg width="30" height="18"><rect x=".5" y=".5" width="29" height="17" rx="7" fill="#fff" stroke="#605e5c"/></svg></div>
  </div></div>
  <div class="scr"></div>
 </section>

 <section class="nw flex-grow-1">
  <div class="d-flex align-items-center ph" style="padding:9px 7px 0 8px">Data<svg width="14" height="14" class="ms-auto"><use href="#chev2"/></svg></div>
  <div class="d-flex align-items-center" style="margin:16px 0 10px 4px;width:172px;height:24px;background:#fff;border:1px solid #d1d1d1;border-bottom-color:#616161;border-radius:4px;padding-left:11px;font-size:12.600px;color:#616161"><svg width="15" height="15"><circle cx="6.500" cy="6.500" r="5.500" stroke="#505050"/><path stroke="#505050" stroke-width="1.200" d="M10.500 10.500l4 4"/></svg><span style="margin-left:7px">Search</span></div>
  <div class="tree d-flex align-items-center"><svg width="8" height="12" style="margin:0 5px 0 15px"><path stroke="#605e5c" d="M1 .500l5.500 5.500L1 11.500"/></svg><svg width="14" height="14"><use href="#tbl"/></svg><span style="margin-left:5px">apps</span></div>
  <div class="tree d-flex align-items-center"><svg width="8" height="12" style="margin:0 5px 0 15px"><path stroke="#605e5c" d="M1 .500l5.500 5.500L1 11.500"/></svg><svg width="14" height="14"><use href="#tbl"/></svg><span style="margin-left:5px">apps_categories</span></div>
  <div class="tree d-flex align-items-center"><svg width="8" height="12" style="margin:0 5px 0 15px"><path stroke="#605e5c" d="M1 .500l5.500 5.500L1 11.500"/></svg><svg width="14" height="14"><use href="#tbl"/></svg><span style="margin-left:5px">categories</span></div>
  <div class="tree d-flex align-items-center"><svg width="8" height="12" style="margin:0 5px 0 15px"><path stroke="#605e5c" d="M1 .500l5.500 5.500L1 11.500"/></svg><svg width="14" height="14"><use href="#tbl"/><circle cx="13" cy="12" r="6" fill="#117865"/><path stroke="#fff" stroke-width="1.300" d="M10.500 12l2 2 3-3.500"/></svg><span style="margin-left:5px">reviews</span></div>
 </section>
</main>

<footer class="status d-flex align-items-center justify-content-between nw" style="padding:1px 18px 0 4px"><span>Page 2 of 3</span>
 <span class="d-flex align-items-center"><svg width="122" height="16"><path stroke="#505050" stroke-width="1.500" d="M0 8h4M114.500 7.500h7M118 4v7"/><path stroke="#505050" d="M7 7.500h100"/><path fill="#505050" d="M56 2h4v11h-4z"/></svg><span style="margin:0 13px 0 13px;width:30px">101%</span><svg width="16" height="12"><path stroke="#505050" d="M.5.500h15v11H.5zM3 4.500v-2h2.500M10.500 2.500H13v2M3 7.500v2h2.500M10.500 9.500H13v-2"/></svg></span></footer>

<!-- taskbar -->
<section class="taskbar d-flex nw">
 <div class="d-flex align-items-center justify-content-center" style="width:48px;padding-bottom:1px"><svg width="16" height="16"><path fill="#fff" d="M0 2.300L6.500 1.400v6.200H0zM7.500 1.200L16 0v7.600H7.500zM0 8.500h6.500v6.200L0 13.800zM7.500 8.500H16V16l-8.500-1.200z"/></svg></div>
 <div class="tsearch d-flex align-items-center"><svg width="17" height="17" style="margin-left:11px"><use href="#mag" width="17" height="17"/></svg><span style="margin-left:11px">Type here to search</span></div>
 <svg width="16" height="15" style="margin:33px 19px 0 16px"><path stroke="#fff" stroke-width="1.200" d="M.6 0v2.500h10V0M.6 4.600h10v6.500H.6zM.6 15v-2.400h10V15M14.500 0v2M14.500 8v7"/><path fill="#fff" d="M13 4h3v3h-3z"/></svg>
 <div class="ti"><svg width="24" height="24"><use href="#copilot" width="24" height="24"/></svg></div>
 <div class="ti"><svg width="24" height="24"><path fill="#000" d="M0 0h24v24H0z"/><path stroke="#fff" stroke-width="2" d="M3 16V10l4 4 3-4v6M11 9l3 6 2.500-5 2.500 5M20.500 9v7l-4-5"/></svg></div>
 <div class="ti run"><svg width="24" height="24"><circle cx="12" cy="12" r="12" fill="#fbc116"/><path fill="#dd4434" d="M1.600 6A12 12 0 0 1 22.400 6H12L7 14z"/><path fill="#269548" d="M1.600 6L7 15l5 3-2 6A12 12 0 0 1 1.600 6z"/><circle cx="12" cy="12" r="5.800" fill="#fff"/><circle cx="12" cy="12" r="4.500" fill="#2c7df0"/></svg></div>
 <div class="ti"><svg width="24" height="24"><path fill="url(#ff)" d="M3 5l2 2 3-1 3-2c-1 3 1 3 2 2l3-6c1 3 6 5 7 11 1 8-5 12-11 12S0 18 1 12c0-3 1-4 2-7z"/><circle cx="12" cy="13" r="5" fill="#7d3bd0"/><path fill="#ff8a1f" d="M4 9l8 0c2 1-1 3-3 3 0 4 5 4 7 2-3 7-11 4-12-5z"/></svg></div>
 <div class="ti"><svg width="24" height="24"><path fill="#e0a21b" d="M1 3h9l1 3H1z"/><path fill="#fcd462" d="M1 5h21v16H1z"/><path fill="#3c9ae0" d="M5 21v-6q0-2 2-2h10q2 0 2 2v6h-4v-4H9v4z"/></svg></div>
 <div class="ti"><svg width="24" height="24"><circle cx="12" cy="12" r="12" fill="#0f5fb0"/><path fill="url(#ed)" d="M0 12C1-3 24-4 24 10c0 5-6 6-9 4 3-4-1-7-5-6-5 1-7 4-10 6z"/><path fill="#1583d8" d="M0 12c2-6 8-6 11-4-4 3-4 10 1 15C4 24 0 18 0 12z"/><path fill="#101010" d="M15 14c-2 3 4 5 8 2.500l-1 .5c-7 4-11-1-7-3z"/></svg></div>
 <div class="ti"><svg width="24" height="24"><path fill="url(#c1)" d="M6 1h9c-2 1-3 3-4 6l-2 8c-1 2-2 2-4 2-4 0-6-1-5-5l2-7c1-3 2-4 4-4z"/><path fill="#2a5ae0" d="M13 1h3c3 0 3 2 3 5l-5 1z"/><path fill="url(#c2)" d="M16 7h5c3 0 3 3 2 6l-2 4h-8z"/><path fill="#000" d="M5 17h19v6H5z"/><text class="sans" x="6" y="22.500" font-size="6.500" font-weight="700" fill="#fff" textLength="17">M365</text></svg></div>
 <div class="ti"><svg width="24" height="24"><path fill="#04192b" d="M0 0h24v24H0z"/><path stroke="#a8773c" stroke-width="1.500" d="M12 2c3 3-3 5 0 7s6 4 1 8l1 4"/><ellipse cx="11.500" cy="13" rx="2" ry="3" fill="#dfe9f2"/></svg></div>
 <div class="ti run"><svg width="24" height="24"><circle cx="12" cy="12" r="12" fill="#5865f2"/><path fill="#fff" d="M6 7q6-3 12 0 2 4 1 9-3 2-4 0H9q-1 2-4 0-1-5 1-9z"/><circle cx="9.500" cy="12" r="1.500" fill="#5865f2"/><circle cx="18" cy="18" r="7.500" fill="#ee5455"/><text class="sans" x="12" y="22" font-size="10" font-weight="600" fill="#fff" textLength="12">9+</text></svg></div>
 <div class="ti run"><svg width="24" height="24"><path fill="#a97a4a" d="M20 3l3 1-1 18-4-1z"/><path fill="#5fb0c4" d="M7 1l14 2-5 16-15-2z"/><path fill="#b9dfe8" d="M7 1l8 1-9 15-5 0z"/><path fill="#e8f2f4" d="M21 3l1 19-7-1 1-3z"/></svg></div>
 <div class="ti run"><svg width="24" height="24"><path fill="#f7f9fb" d="M1 1h22v22H1z"/><path stroke="#3b7ea6" stroke-width="1.300" d="M12 8v8M8 12h8M12 2v4M10 4h4M12 18v4M10 20h4M2 12h4M4 10v4M18 12h4M20 10v4M7 5v4M5 7h4M17 5v4M15 7h4M7 15v4M5 17h4M17 15v4M15 17h4"/></svg></div>
 <div class="ti run cur"><svg width="24" height="24"><path fill="url(#pb)" d="M12 0h9v24h-9z"/><path fill="#f0c02e" d="M7 6h9v18H7z"/><path fill="#f7dc6a" d="M2 12h8v12H2z"/></svg></div>

 <div class="tray" style="margin-left:596px">
  <div><svg width="16" height="16"><path fill="#fff" d="M3 4q5-2 10 0 3 5 2 8-3 2-4 0H5q-1 2-4 0-1-4 2-8z"/><circle cx="5.500" cy="8.500" r="1.400" fill="#111"/><circle cx="10.500" cy="8.500" r="1.400" fill="#111"/><circle cx="13" cy="3" r="3" fill="#f04747"/></svg></div>
  <div><svg width="16" height="16"><path fill="#e2062c" d="M0 0h16v16H0z"/><path stroke="#fff" stroke-width="2" d="M3 3h6v6M4 10V6.500h2V10z"/><path stroke="#fff" stroke-width="2" d="M13 7v4M13 12.500v2"/></svg></div>
  <div><svg width="14" height="16"><rect x="1" width="12" height="16" rx="6" fill="#0a84ff"/><path stroke="#fff" stroke-width="1.200" d="M4 5l6 6-3 3V2l3 3-6 6"/></svg></div>
  <div><svg width="16" height="16"><path fill="#510085" d="M0 0h16v16H0z"/><path stroke="#fff" stroke-width="2" d="M5 12V4l6 8V4"/></svg></div>
  <div><svg width="16" height="16"><circle cx="8" cy="8" r="8" fill="#1a5d96"/><circle cx="10.500" cy="6" r="3" stroke="#fff" stroke-width="1.500"/><path stroke="#fff" stroke-width="2.500" d="M0 9l5 2.500 3-3"/></svg></div>
  <div><svg width="16" height="16"><path fill="#000" d="M0 0h16v16H0z"/><path stroke="#8ecfd6" d="M4 4q4 4 8 8M12 4Q8 8 4 12"/></svg></div>
  <div><svg width="16" height="16"><path stroke="#eee" stroke-width="1.300" d="M3.500 3V1.500h10l1.500 1V11l-1.500 1.500M1.500 4.500l1-1.500h8.500l1.500 1.500V13L11 14.500H3L1.500 13z"/><circle cx="7" cy="9" r="3.500" stroke="#eee" stroke-width="1.300"/><circle cx="7" cy="9" r="1.200" fill="#eee"/></svg></div>
  <div><svg width="16" height="16"><circle cx="8" cy="8" r="8" fill="#36c32e"/><path stroke="#145012" stroke-width="1.400" d="M3 7q3-3 4 1 0 3-2 4M12 4q-4 1-4 5l3 3M5 4l4 4 4 0"/></svg></div>
  <div><svg width="16" height="16"><path stroke="#fff" d="M5 4.500V.500h6v4M3.500 5.500h8v9h-7q-1 0-1-1zM7 2.500h2"/><path stroke="#ccc" d="M10 12l2 3 4-4"/></svg></div>
  <div><svg width="16" height="16"><path stroke="#fff" stroke-width="1.200" d="M1 5.500h3l4-3.500v12L4 10.500H1zM10.500 6l4.500 4.500M15 6l-4.500 4.500"/></svg></div>
  <div><svg width="16" height="16"><path fill="#222" d="M1 0h13v12l-6.500 4L1 12z"/><text class="sans" x="2" y="7.500" font-size="7" fill="#ddd" textLength="11" lengthAdjust="spacingAndGlyphs" font-weight="700">EPIC</text><path stroke="#aaa" d="M3 10.500h9"/></svg></div>
  <div><svg width="16" height="16"><path fill="#1f4fc8" d="M1 2q5 0 7 5 2-5 6-5 3 4 0 11l-3-4-4 4q-4 0-6-3 2-4 0-8z"/><path fill="#ff6a13" d="M11 7l5.500 9h-11z"/><path stroke="#fff" d="M11 10v3M11 14v1"/></svg></div>
  <div><svg width="16" height="16"><path stroke="#fff" stroke-width="1.200" d="M5 2.500h10.500v8H5M2.500 4v8.500h3M.5 1.500h4v3h-4zM10 11v3M6 14.500h8"/></svg></div>
 </div>
 <div class="clock" style="margin-left:-4px;padding-top:7px">11:58 PM<br>Monday<br>4/28/2025</div>
 <svg width="26" height="26" style="margin:32px 0 0 9px"><path fill="#fff" d="M0 0h16v13h-6v3l-4-3H0z"/><path stroke="#111" d="M3 3.500h10M3 6.500h10M3 9.500h7"/><circle cx="15.500" cy="15.500" r="8" fill="#252525" stroke="#777"/><text class="sans" x="12.500" y="19.500" font-size="11" font-weight="600" fill="#fff">1</text></svg>
 <div style="width:1px;background:#666;margin-left:9px"></div>
</section>
<script src="https://cdn.jsdelivr.net/npm/bootstrap@5.3.0/dist/js/bootstrap.bundle.min.js"></script>
</body>
</html>
